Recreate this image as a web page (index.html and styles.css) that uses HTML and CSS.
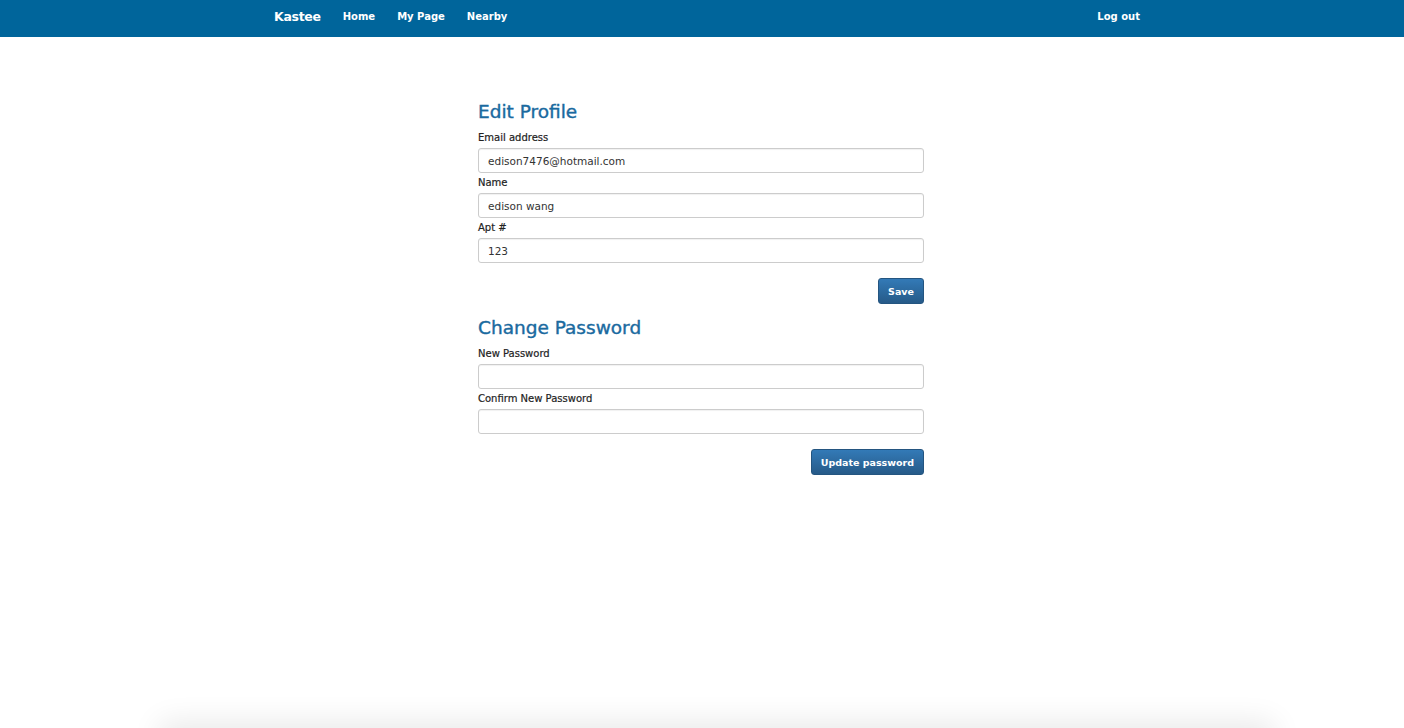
FILE: index.html
```html
<!DOCTYPE html>
<html>
<head>
<meta charset="utf-8">
<title>Kastee - Edit Profile</title>
<link rel="stylesheet" href="styles.css">
</head>
<body>
<nav class="navbar">
  <div class="nav-inner">
    <div class="nav-left">
      <a class="brand" href="#">Kastee</a>
      <a class="nav-link" href="#">Home</a>
      <a class="nav-link" href="#">My Page</a>
      <a class="nav-link" href="#">Nearby</a>
    </div>
    <a class="nav-link" href="#">Log out</a>
  </div>
</nav>
<main class="page">
  <form class="form">
    <h2 class="title">Edit Profile</h2>
    <label class="label">Email address</label>
    <input class="input" type="text" value="edison7476@hotmail.com">
    <label class="label">Name</label>
    <input class="input" type="text" value="edison wang">
    <label class="label">Apt #</label>
    <input class="input" type="text" value="123">
    <div class="actions"><button class="btn" type="button">Save</button></div>

    <h2 class="title">Change Password</h2>
    <label class="label">New Password</label>
    <input class="input" type="password">
    <label class="label">Confirm New Password</label>
    <input class="input" type="password">
    <div class="actions"><button class="btn" type="button">Update password</button></div>
  </form>
</main>
<div class="footer-shadow"></div>
</body>
</html>
```
FILE: styles.css
```css
* { box-sizing: border-box; }
html, body { margin: 0; padding: 0; height: 100%; overflow: hidden; }
body {
  font-family: "DejaVu Sans", "Noto Sans", sans-serif;
  color: #333;
  background: #fff;
  position: relative;
}
.navbar {
  background: #00659b;
  height: 37px;
}
.nav-inner {
  width: 876px;
  margin: 0 auto;
  padding: 0 0 5px 10px;
  height: 37px;
  display: flex;
  align-items: center;
  justify-content: space-between;
}
.nav-left { display: flex; align-items: center; gap: 22px; }
.brand {
  color: #fff;
  font-weight: bold;
  font-size: 12.5px;
  text-decoration: none;
  letter-spacing: -0.3px;
}
.nav-link {
  color: #fff;
  font-weight: bold;
  font-size: 10px;
  text-decoration: none;
}
.page {
  display: flex;
  justify-content: center;
  padding: 64px 2px 0 0;
}
.form {
  width: 446px;
  display: flex;
  flex-direction: column;
}
.title {
  color: #1a6a9f;
  font-weight: normal;
  font-size: 18.5px;
  -webkit-text-stroke: 0.4px #1a6a9f;
  margin: 0 0 8px;
  line-height: 22px;
}
.label {
  font-size: 10px;
  font-weight: normal;
  -webkit-text-stroke: 0.2px #222;
  color: #222;
  line-height: 14px;
  margin-bottom: 3px;
}
.input {
  height: 25px;
  border: 1px solid #ccc;
  border-radius: 3px;
  padding: 0 9px;
  font-family: inherit;
  font-size: 10.5px;
  color: #333;
  box-shadow: inset 0 1px 1px rgba(0,0,0,0.06);
  margin: 0 0 3px;
}
.actions {
  display: flex;
  justify-content: flex-end;
  margin: 12px 0 13px;
}
.btn {
  height: 26px;
  padding: 0 9px;
  border: 1px solid #245580;
  border-radius: 3px;
  background: linear-gradient(#337ab7, #265a88);
  color: #fff;
  font-family: inherit;
  font-weight: bold;
  font-size: 9.5px;
}
.footer-shadow {
  position: absolute;
  left: 160px;
  right: 130px;
  top: 728px;
  height: 40px;
  box-shadow: 0 -6px 30px rgba(0,0,0,0.09);
}
```
